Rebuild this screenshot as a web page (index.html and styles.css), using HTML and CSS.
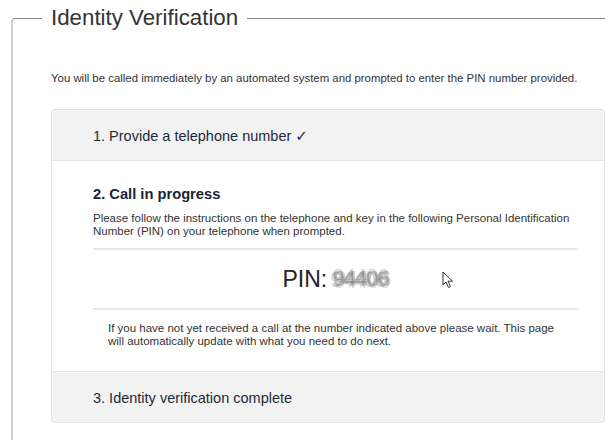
FILE: index.html
```html
<!DOCTYPE html>
<html>
<head>
<meta charset="utf-8">
<link rel="stylesheet" href="styles.css">
</head>
<body>
<fieldset class="verify">
  <legend class="verify-title">Identity Verification</legend>
  <p class="intro">You will be called immediately by an automated system and prompted to enter the PIN number provided.</p>
  <div class="panel">
    <div class="step step-done">1. Provide a telephone number <span class="tick">✓</span></div>
    <div class="step-body">
      <h3 class="step-title">2. Call in progress</h3>
      <p class="step-text">Please follow the instructions on the telephone and key in the following Personal Identification Number (PIN) on your telephone when prompted.</p>
      <div class="pin-row">
        <span class="pin-label">PIN:</span>
        <span class="pin-value">94406</span>
        <svg class="cursor" width="12" height="18" viewBox="0 0 12 18"><path d="M1 1 L1 14 L4 11 L6.5 16.5 L8.5 15.5 L6 10.2 L10.5 10.2 Z" fill="#fff" stroke="#333" stroke-width="1" stroke-linejoin="round"/></svg>
      </div>
      <p class="note">If you have not yet received a call at the number indicated above please wait. This page will automatically update with what you need to do next.</p>
    </div>
    <div class="step step-next">3. Identity verification complete</div>
  </div>
</fieldset>
</body>
</html>
```

FILE: styles.css
```css
html, body {
  margin: 0;
  padding: 0;
  background: #fff;
}
body {
  font-family: "Liberation Sans", Arial, sans-serif;
  color: #333;
  overflow: hidden;
}
.verify {
  margin: 5px 0 0 11px;
  width: 594px;
  box-sizing: border-box;
  padding: 0 0 20px 38px;
  border: none;
  border-top: 1px solid #8a8a8a;
  border-left: 2px solid #cfcfcf;
  border-top-left-radius: 4px;
  min-height: 435px;
}
.verify-title {
  margin-left: -9px;
  padding: 0 9px;
  font-size: 22.3px;
  line-height: 26px;
  color: #333;
}
.intro {
  margin: 40px 0 0 0;
  font-size: 11.4px;
  line-height: 14px;
  color: #333;
}
.panel {
  margin-top: 24px;
  border: 1px solid #e0e0e0;
  border-radius: 4px;
  overflow: hidden;
}
.step {
  height: 50px;
  display: flex;
  align-items: center;
  padding-left: 41px;
  padding-top: 1px;
  box-sizing: border-box;
  background: #f2f2f2;
  font-size: 14.5px;
  color: #1d2a3a;
}
.step-done {
  height: 51px;
  border-bottom: 1px solid #e3e3e3;
}
.step-next {
  height: 51px;
  border-top: 1px solid #e3e3e3;
}
.tick {
  font-family: "DejaVu Sans", sans-serif;
  font-size: 15px;
  margin-left: 4px;
}
.step-body {
  padding: 25px 26px 23px 41px;
  background: #fff;
}
.step-title {
  margin: 0;
  font-size: 14.7px;
  line-height: 17px;
  font-weight: bold;
  color: #1a2536;
}
.step-text {
  margin: 9px 0 0 0;
  font-size: 11.5px;
  line-height: 13px;
  color: #333;
}
.pin-row {
  position: relative;
  margin-top: 10px;
  height: 58px;
  border-top: 2px solid #e8e8e8;
  border-bottom: 2px solid #e8e8e8;
  display: flex;
  align-items: center;
  justify-content: center;
  font-size: 23px;
  color: #222;
}
.pin-label {
  margin-right: 5px;
}
.pin-value {
  font-size: 22px;
  color: rgba(80, 80, 80, 0.35);
  text-shadow: 2px 0 0 rgba(150,150,150,0.45), -2px 1px 0 rgba(150,150,150,0.45), 0 -2px 0 rgba(150,150,150,0.4), 1px 2px 0 rgba(160,160,160,0.4);
  filter: blur(0.5px);
  letter-spacing: -1px;
}
.cursor {
  position: absolute;
  left: 349px;
  top: 21px;
}
.note {
  margin: 12px 0 0 0;
  padding: 0 15px;
  font-size: 11.5px;
  line-height: 13px;
  color: #333;
}
```
